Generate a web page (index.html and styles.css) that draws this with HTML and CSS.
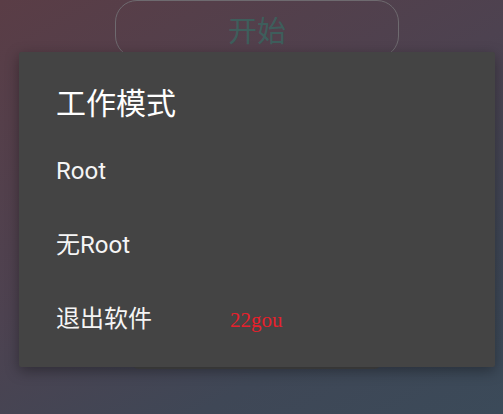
FILE: index.html
```html
<!DOCTYPE html>
<html lang="zh">
<head>
<meta charset="utf-8">
<link rel="stylesheet" href="styles.css">
</head>
<body>
<div class="screen">
  <div class="start-btn">开始</div>
  <div class="panel"></div>
  <div class="dialog">
    <div class="dialog-title">工作模式</div>
    <div class="item">Root</div>
    <div class="item">无Root</div>
    <div class="item">退出软件<span class="tag">22gou</span></div>
  </div>
</div>
</body>
</html>
```
FILE: styles.css
```css
html, body {
  margin: 0;
  padding: 0;
}
.screen {
  position: relative;
  width: 503px;
  height: 414px;
  overflow: hidden;
  background: linear-gradient(150deg, #5a3d46 0%, #4d4250 45%, #3f4756 75%, #3b4a59 100%);
  font-family: Roboto, "Noto Sans CJK SC", sans-serif;
}
.start-btn {
  box-sizing: border-box;
  width: 284px;
  height: 58px;
  margin: 0 0 0 115px;
  border: 1px solid #6e6a6f;
  border-radius: 22px;
  color: #3e5e5c;
  font-family: "Noto Sans CJK SC", sans-serif;
  font-size: 29px;
  line-height: 56px;
  text-align: center;
}
.panel {
  width: 251px;
  height: 299px;
  margin: 12px 0 0 131px;
  background: #474747;
  border-radius: 8px;
}
.dialog {
  position: absolute;
  left: 19px;
  top: 52px;
  box-sizing: border-box;
  width: 476px;
  height: 315px;
  padding: 29px 0 0 37px;
  background: #444444;
  border-radius: 2px;
  box-shadow: 0 4px 14px rgba(0, 0, 0, 0.35);
  color: #ffffff;
}
.dialog-title {
  font-family: "Noto Sans CJK SC", sans-serif;
  font-size: 30px;
  line-height: 40px;
  height: 40px;
  margin-bottom: 13px;
}
.item {
  height: 74px;
  line-height: 74px;
  font-size: 24px;
  padding-left: 0;
  color: #f5f5f5;
}
.tag {
  margin-left: 78px;
  font-family: "Liberation Serif", serif;
  font-size: 21px;
  color: #e8202c;
}
```
